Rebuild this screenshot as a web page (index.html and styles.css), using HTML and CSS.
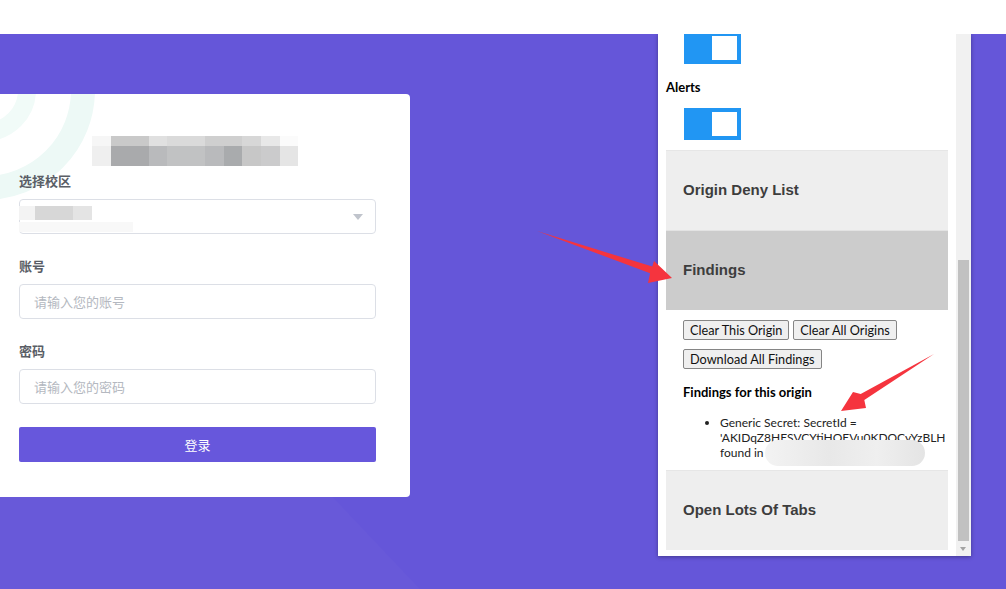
FILE: index.html
```html
<!DOCTYPE html>
<html lang="zh-CN">
<head>
  <meta charset="UTF-8">
  <meta name="viewport" content="width=device-width, initial-scale=1.0">
  <title>登录</title>
  <link rel="stylesheet" href="styles.css">
</head>
<body>
  <div class="topbar"></div>

  <div class="stage">
    <!-- 登录卡片 -->
    <div class="login-card">
      <svg class="card-rings" width="160" height="160" viewBox="0 0 160 160">
        <circle cx="-15" cy="-4" r="98" fill="none" stroke="#edf9f6" stroke-width="24"/>
        <circle cx="-15" cy="-4" r="42" fill="none" stroke="#f1fbf8" stroke-width="18"/>
      </svg>
      <div class="card-content">
        <div class="logo-blur">
          <div class="logo-row top"></div>
          <div class="logo-row bottom"></div>
        </div>

        <label class="field-label">选择校区</label>
        <div class="select-box">
          <span class="select-blur"></span>
          <span class="select-arrow"></span>
        </div>

        <label class="field-label gap">账号</label>
        <input class="text-input" type="text" placeholder="请输入您的账号">

        <label class="field-label gap">密码</label>
        <input class="text-input" type="password" placeholder="请输入您的密码">

        <button class="login-btn">登录</button>
      </div>
    </div>

    <!-- 扩展弹窗 -->
    <div class="popup">
      <div class="popup-body">
        <div class="toggle first"><span class="knob"></span></div>
        <div class="opt-title">Alerts</div>
        <div class="toggle"><span class="knob"></span></div>

        <div class="section">Origin Deny List</div>
        <div class="section active">Findings</div>

        <div class="findings">
          <div class="btn-row">
            <button class="plain-btn">Clear This Origin</button>
            <button class="plain-btn">Clear All Origins</button>
          </div>
          <div class="btn-row">
            <button class="plain-btn">Download All Findings</button>
          </div>
          <h4 class="findings-title">Findings for this origin</h4>
          <ul class="findings-list">
            <li>Generic Secret: SecretId = 'AKIDqZ8HESVCYtiHOEVu0KDOCyYzBLH found in</li>
          </ul>
          <div class="smudge"></div>
        </div>

        <div class="section">Open Lots Of Tabs</div>
      </div>
      <div class="scrollbar">
        <div class="thumb"></div>
        <div class="arrow-down"></div>
      </div>
    </div>

    <!-- 标注箭头 -->
    <svg class="marks" width="1006" height="555" viewBox="0 34 1006 555">
      <polygon points="537,231 652.3,266.6 654,261 672,278 648,283 650.1,273.2" fill="#f5343e"/>
      <polygon points="934,354 860.7,394.1 853,392 841,411 866,408 864.3,400.1" fill="#f5343e"/>
    </svg>
  </div>
</body>
</html>
```

FILE: styles.css
```css
body {
  margin: 0;
  font-family: "Noto Sans CJK SC", "Liberation Sans", sans-serif;
  overflow: hidden;
}

.topbar {
  height: 34px;
  background: #fff;
}

.stage {
  position: relative;
  height: 555px;
  background: #6556d9;
  overflow: hidden;
}

.stage::before {
  content: '';
  position: absolute;
  inset: 0;
  background: rgba(255, 255, 255, 0.018);
  clip-path: polygon(0 100%, 0 60%, 330px 460px, 420px 555px);
}

/* 登录卡片 */
.login-card {
  position: relative;
  width: 430px;
  height: 403px;
  margin: 60px 0 0 -20px;
  background: #fff;
  border-radius: 4px;
  overflow: hidden;
}

.card-rings {
  position: absolute;
  left: 20px;
  top: 0;
}

.card-content {
  position: relative;
  padding: 42px 34px 0 39px;
}

.logo-blur {
  margin-left: 73px;
  width: 206px;
  height: 30px;
}

.logo-row {
  height: 10px;
}

.logo-row.top {
  background: linear-gradient(to right,
    #f6f6f6 0 19px, #c9c9c9 19px 57px, #e0e0e0 57px 75px, #dadada 75px 113px,
    #cfcfcf 113px 150px, #d7d7d7 150px 169px, #e8e8e8 169px 188px, #fbfbfb 188px);
}

.logo-row.bottom {
  height: 20px;
  background: linear-gradient(to right,
    #efefef 0 19px, #a9aaac 19px 57px, #b9babc 57px 75px, #c1c2c3 75px 113px,
    #b9babc 113px 132px, #a9abad 132px 150px, #c7c7c7 150px 169px, #cbcbcc 169px 188px, #e5e5e5 188px);
}

.field-label {
  display: block;
  margin-top: 5px;
  font-size: 13px;
  line-height: 20px;
  font-weight: 600;
  color: #5a5e66;
}

.field-label.gap {
  margin-top: 22px;
}

.select-box {
  position: relative;
  box-sizing: border-box;
  height: 35px;
  margin-top: 8px;
  border: 1px solid #dcdfe6;
  border-radius: 4px;
  background: #fff;
}

.select-blur {
  position: absolute;
  left: -1px;
  top: 6px;
  width: 73px;
  height: 14px;
  background: linear-gradient(to right, #f3f3f3 0 16px, #d7d7d7 16px 54px, #e4e4e4 54px);
}

.select-blur::after {
  content: '';
  position: absolute;
  left: 0;
  top: 16px;
  width: 114px;
  height: 10px;
  background: #f8f8f8;
}

.select-arrow {
  position: absolute;
  right: 12px;
  top: 14px;
  border-width: 6px 5px 0;
  border-style: solid;
  border-color: #c0c4cc transparent transparent;
}

.text-input {
  display: block;
  box-sizing: border-box;
  width: 100%;
  height: 35px;
  margin-top: 8px;
  padding: 0 14px;
  border: 1px solid #dcdfe6;
  border-radius: 4px;
  font-family: inherit;
  font-size: 13px;
  color: #606266;
  outline: none;
}

.text-input::placeholder {
  color: #b4b8c0;
}

.login-btn {
  display: block;
  width: 100%;
  height: 35px;
  margin-top: 23px;
  border: none;
  border-radius: 2px;
  background: #6757dc;
  color: #fff;
  font-family: inherit;
  font-size: 13px;
}

/* 扩展弹窗 */
.popup {
  position: absolute;
  left: 658px;
  top: 0;
  width: 313px;
  height: 522px;
  display: flex;
  background: #fff;
  box-shadow: 0 1px 4px rgba(0, 0, 0, 0.35);
  font-family: Lato, "Open Sans", sans-serif;
}

.popup-body {
  width: 298px;
  overflow: hidden;
}

.toggle {
  position: relative;
  width: 57px;
  height: 32px;
  margin: 13px 0 0 26px;
  background: #2196f3;
}

.toggle.first {
  margin-top: -2px;
}

.knob {
  position: absolute;
  right: 4px;
  top: 4px;
  width: 25px;
  height: 24px;
  background: #fff;
}

.opt-title {
  margin: 15px 0 0 8px;
  font-size: 13px;
  line-height: 16px;
  font-weight: bold;
  color: #000;
}

.section {
  box-sizing: border-box;
  height: 80px;
  margin: 0 8px;
  padding: 0 0 2px 17px;
  display: flex;
  align-items: center;
  background: #eeeeee;
  border-top: 1px solid #e6e6e6;
  font-family: "Liberation Sans", Arial, sans-serif;
  font-size: 15px;
  font-weight: bold;
  color: #3d3d3d;
}

.toggle + .section {
  margin-top: 10px;
}

.section.active {
  background: #cccccc;
  border-top-color: #e3e3e3;
}

.findings {
  position: relative;
  margin: 0 8px;
  padding: 10px 0 10px 17px;
  overflow: hidden;
}

.btn-row {
  display: flex;
  gap: 4px;
  margin-bottom: 9px;
}

.plain-btn {
  height: 20px;
  padding: 0 6px;
  border: 1px solid #858585;
  border-radius: 2px;
  background: #efefef;
  font-family: Lato, "Open Sans", sans-serif;
  font-size: 12.7px;
  color: #111;
}

.findings-title {
  margin: 15px 0 0;
  font-size: 13px;
  line-height: 16px;
  font-weight: bold;
  color: #000;
}

.findings-list {
  margin: 15px 0 0;
  padding-left: 37px;
  font-size: 12px;
  line-height: 15px;
  color: #222;
}

.smudge {
  position: absolute;
  left: 99px;
  top: 130px;
  width: 160px;
  height: 26px;
  border-radius: 13px;
  background: linear-gradient(to right, #f3f3f3, #e8e8e8 40%, #efefef 70%, #e4e4e4);
}

.scrollbar {
  position: relative;
  width: 15px;
  background: #f1f1f1;
}

.thumb {
  position: absolute;
  left: 2px;
  right: 2px;
  top: 226px;
  height: 281px;
  background: #c1c1c1;
}

.arrow-down {
  position: absolute;
  left: 4px;
  bottom: 5px;
  border-width: 4px 3.5px 0;
  border-style: solid;
  border-color: #a3a3a3 transparent transparent;
}

.marks {
  position: absolute;
  left: 0;
  top: 0;
  pointer-events: none;
}
```
